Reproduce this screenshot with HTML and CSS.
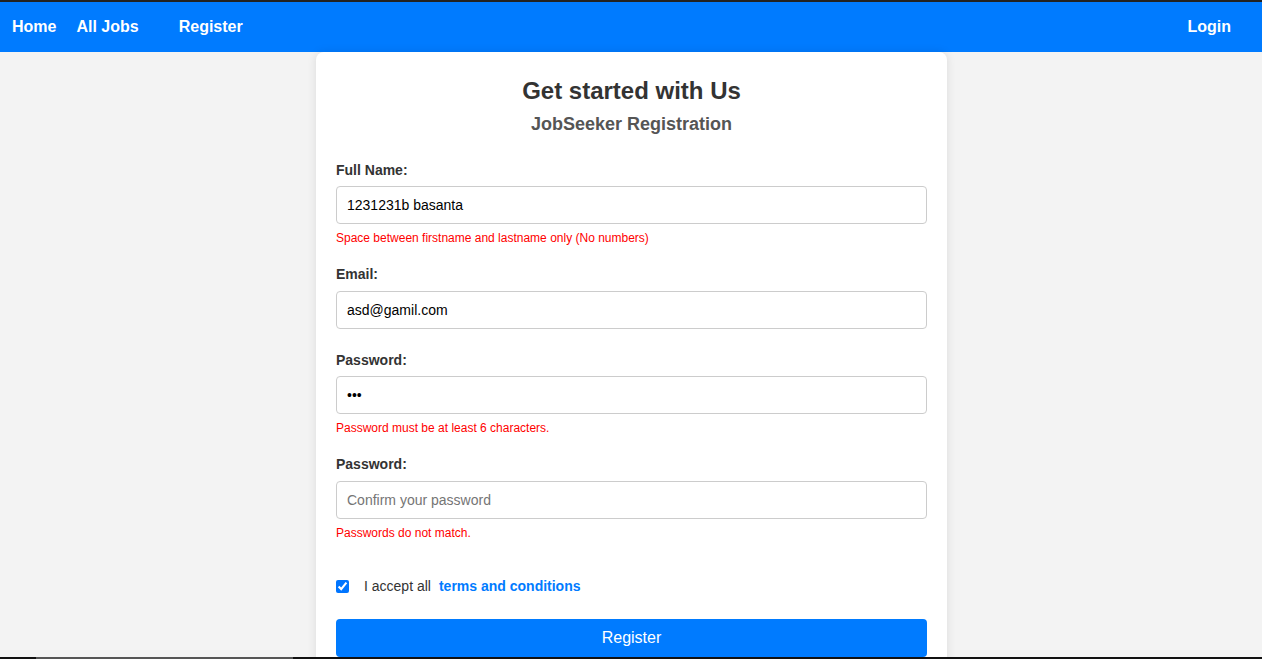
FILE: index.html
```html
<!DOCTYPE html>
<html lang="en">
<head>
<meta charset="utf-8">
<title>JobSeeker Registration</title>
<link rel="stylesheet" href="styles.css">
</head>
<body>
<nav class="navbar">
  <div class="nav-left">
    <a class="nav-link" href="#">Home</a>
    <a class="nav-link" href="#">All Jobs</a>
    <a class="nav-link nav-gap" href="#">Register</a>
  </div>
  <div class="nav-right">
    <a class="nav-link" href="#">Login</a>
  </div>
</nav>
<main class="page">
  <form class="card">
    <h2 class="title">Get started with Us</h2>
    <h3 class="subtitle">JobSeeker Registration</h3>

    <div class="group">
      <label class="label">Full Name:</label>
      <input class="input" type="text" value="1231231b basanta">
      <p class="error">Space between firstname and lastname only (No numbers)</p>
    </div>

    <div class="group group-plain">
      <label class="label label-wide">Email:</label>
      <input class="input" type="email" value="asd@gamil.com">
    </div>

    <div class="group">
      <label class="label">Password:</label>
      <input class="input" type="password" value="abc">
      <p class="error">Password must be at least 6 characters.</p>
    </div>

    <div class="group">
      <label class="label label-wide">Password:</label>
      <input class="input" type="password" placeholder="Confirm your password">
      <p class="error">Passwords do not match.</p>
    </div>

    <div class="terms">
      <input class="check" type="checkbox" checked>
      <span class="terms-text">I accept all</span>
      <a class="terms-link" href="#">terms and conditions</a>
    </div>

    <button class="btn" type="button">Register</button>
  </form>
</main>
<div class="frame-bottom"><div class="frame-thumb"></div></div>
</body>
</html>
```
FILE: styles.css
```css
* { box-sizing: border-box; }
html, body { margin: 0; padding: 0; }
body {
  font-family: "Liberation Sans", Arial, sans-serif;
  background: #f3f3f3;
  border-top: 2px solid #222;
  height: 659px;
  overflow: hidden;
}
.navbar {
  height: 50px;
  background: #007bff;
  display: flex;
  align-items: center;
  justify-content: space-between;
  padding: 0 21px 0 2px;
}
.nav-left, .nav-right { display: flex; align-items: center; }
.nav-link {
  color: #fff;
  font-weight: bold;
  font-size: 16px;
  text-decoration: none;
  padding: 10px;
}
.nav-gap { margin-left: 20px; }
.page { display: flex; justify-content: center; padding-left: 1px; }
.card {
  width: 631px;
  background: #fff;
  border-radius: 8px;
  box-shadow: 0 0 10px rgba(0,0,0,0.1);
  padding: 25px 20px 20px;
}
.title {
  margin: 0;
  text-align: center;
  font-size: 24px;
  color: #333;
}
.subtitle {
  margin: 9px 0 27px;
  text-align: center;
  font-size: 18px;
  color: #555;
}
.group { margin-bottom: 21px; }
.group-plain { margin-bottom: 23px; }
.label {
  display: block;
  font-size: 14px;
  font-weight: bold;
  color: #333;
  margin-bottom: 8px;
}
.label-wide { margin-bottom: 9px; }
.input {
  display: block;
  width: 100%;
  height: 38px;
  padding: 10px;
  font-size: 14px;
  font-family: "Liberation Sans", Arial, sans-serif;
  border: 1px solid #ccc;
  border-radius: 4px;
  color: #000;
  background: #fff;
}
.input::placeholder { color: #757575; }
.error {
  margin: 7px 0 0;
  font-size: 12px;
  color: #f00;
}
.terms {
  display: flex;
  align-items: center;
  margin-top: 38px;
  font-size: 14px;
}
.check {
  margin: 0 15px 0 0;
  width: 13px;
  height: 13px;
  accent-color: #0075ff;
}
.terms-text { color: #333; margin-right: 8px; }
.terms-link {
  color: #007bff;
  font-weight: bold;
  text-decoration: none;
}
.btn {
  display: block;
  width: 100%;
  margin-top: 25px;
  height: 38px;
  background: #007bff;
  color: #fff;
  border: none;
  border-radius: 4px;
  font-size: 16px;
  font-family: "Liberation Sans", Arial, sans-serif;
}
.frame-bottom {
  position: fixed;
  left: 0; right: 0; bottom: 0;
  height: 2px;
  background: #111;
}
.frame-thumb {
  position: absolute;
  left: 36px;
  width: 257px;
  top: 0; bottom: 0;
  background: #555;
}
```
